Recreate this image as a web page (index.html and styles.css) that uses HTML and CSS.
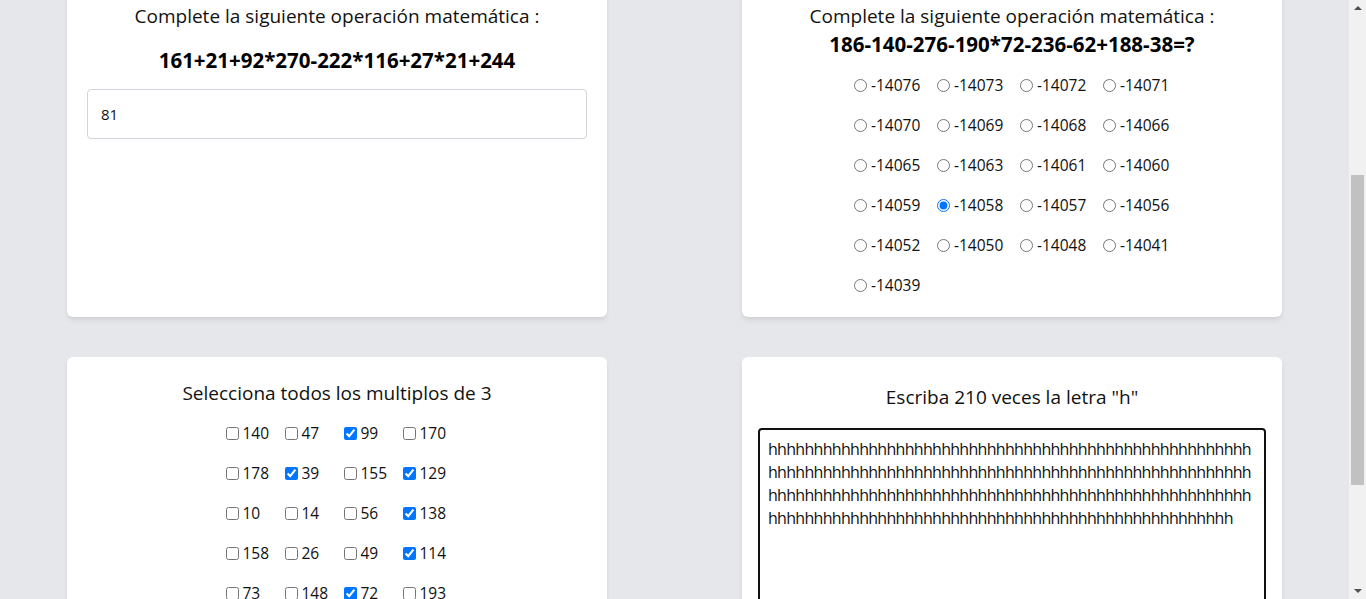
FILE: index.html
```html
<!DOCTYPE html>
<html lang="es">
<head>
<meta charset="utf-8">
<title>Ejercicios</title>
<link rel="stylesheet" href="styles.css">
</head>
<body>
<main class="page">
  <div class="grid">
    <section class="card card-a">
      <p class="title">Complete la siguiente operación matemática :</p>
      <p class="expr expr-a">161+21+92*270-222*116+27*21+244</p>
      <input class="answer" type="text" value="81">
    </section>

    <section class="card card-b">
      <p class="title">Complete la siguiente operación matemática :</p>
      <p class="expr">186-140-276-190*72-236-62+188-38=?</p>
      <div class="options radios">
        <label class="opt"><input type="radio" name="r"> -14076</label>
        <label class="opt"><input type="radio" name="r"> -14073</label>
        <label class="opt"><input type="radio" name="r"> -14072</label>
        <label class="opt"><input type="radio" name="r"> -14071</label>
        <label class="opt"><input type="radio" name="r"> -14070</label>
        <label class="opt"><input type="radio" name="r"> -14069</label>
        <label class="opt"><input type="radio" name="r"> -14068</label>
        <label class="opt"><input type="radio" name="r"> -14066</label>
        <label class="opt"><input type="radio" name="r"> -14065</label>
        <label class="opt"><input type="radio" name="r"> -14063</label>
        <label class="opt"><input type="radio" name="r"> -14061</label>
        <label class="opt"><input type="radio" name="r"> -14060</label>
        <label class="opt"><input type="radio" name="r"> -14059</label>
        <label class="opt"><input type="radio" name="r" checked> -14058</label>
        <label class="opt"><input type="radio" name="r"> -14057</label>
        <label class="opt"><input type="radio" name="r"> -14056</label>
        <label class="opt"><input type="radio" name="r"> -14052</label>
        <label class="opt"><input type="radio" name="r"> -14050</label>
        <label class="opt"><input type="radio" name="r"> -14048</label>
        <label class="opt"><input type="radio" name="r"> -14041</label>
        <label class="opt"><input type="radio" name="r"> -14039</label>
      </div>
    </section>

    <section class="card card-c">
      <p class="title">Selecciona todos los multiplos de 3</p>
      <div class="options checks">
        <label class="opt"><input type="checkbox"> 140</label>
        <label class="opt"><input type="checkbox"> 47</label>
        <label class="opt"><input type="checkbox" checked> 99</label>
        <label class="opt"><input type="checkbox"> 170</label>
        <label class="opt"><input type="checkbox"> 178</label>
        <label class="opt"><input type="checkbox" checked> 39</label>
        <label class="opt"><input type="checkbox"> 155</label>
        <label class="opt"><input type="checkbox" checked> 129</label>
        <label class="opt"><input type="checkbox"> 10</label>
        <label class="opt"><input type="checkbox"> 14</label>
        <label class="opt"><input type="checkbox"> 56</label>
        <label class="opt"><input type="checkbox" checked> 138</label>
        <label class="opt"><input type="checkbox"> 158</label>
        <label class="opt"><input type="checkbox"> 26</label>
        <label class="opt"><input type="checkbox"> 49</label>
        <label class="opt"><input type="checkbox" checked> 114</label>
        <label class="opt"><input type="checkbox"> 73</label>
        <label class="opt"><input type="checkbox"> 148</label>
        <label class="opt"><input type="checkbox" checked> 72</label>
        <label class="opt"><input type="checkbox"> 193</label>
      </div>
    </section>

    <section class="card card-d">
      <p class="title">Escriba 210 veces la letra "h"</p>
      <textarea class="typing" data-letter="h" data-count="210"></textarea>
    </section>
  </div>
</main>
<div class="scrollbar" aria-hidden="true">
  <span class="arrow arrow-up"></span>
  <div class="track"><span class="thumb"></span></div>
  <span class="arrow arrow-down"></span>
</div>
<script src="script.js"></script>
</body>
</html>
```

FILE: styles.css
```css
* { box-sizing: border-box; }

html, body {
  margin: 0;
  height: 599px;
  overflow: hidden;
}

body {
  display: flex;
  font-family: "Open Sans", "Noto Sans", sans-serif;
  color: #111;
  background: #e5e7eb;
}

.page {
  flex: 1;
  min-width: 0;
  overflow: hidden;
}

.grid {
  display: grid;
  grid-template-columns: 540px 540px;
  column-gap: 135px;
  row-gap: 40px;
  padding: 0 67px;
  margin-top: -16px;
}

.card {
  background: #fff;
  border-radius: 6px;
  box-shadow: 0 4px 6px -1px rgba(0,0,0,.08), 0 2px 4px -2px rgba(0,0,0,.08);
  padding: 20px 20px;
  display: flex;
  flex-direction: column;
  align-items: center;
}

.title {
  margin: 0;
  font-size: 19px;
  line-height: 24px;
  text-align: center;
  color: #111;
}

.expr {
  margin: 2px 0 0;
  font-size: 20.5px;
  line-height: 28px;
  font-weight: 700;
  color: #000;
  text-align: center;
}

.expr-a { margin-top: 18px; }

.answer {
  align-self: stretch;
  margin-top: 15px;
  height: 50px;
  border: 1px solid #d1d5db;
  border-radius: 4px;
  padding: 0 13px;
  font: inherit;
  font-size: 15px;
  color: #111;
  outline: none;
}

.options {
  display: grid;
  row-gap: 16px;
  margin-top: 15px;
  font-size: 15.5px;
}

.radios { grid-template-columns: repeat(4, 67px); column-gap: 16px; }
.checks { grid-template-columns: repeat(4, 46px); column-gap: 13px; }

.opt {
  display: flex;
  align-items: center;
  gap: 4px;
  height: 24px;
  white-space: nowrap;
  color: #111;
}

.opt input {
  margin: 0;
  width: 13px;
  height: 13px;
  flex: none;
}

.card-c { padding-top: 24px; }
.card-c .options { margin-top: 16px; }

.card-d { padding: 28px 16px 20px; }

.typing {
  align-self: stretch;
  margin-top: 19px;
  height: 240px;
  border: 2px solid #111;
  border-radius: 4px;
  padding: 8px;
  font-family: "Open Sans", "Noto Sans", sans-serif;
  font-size: 16px;
  letter-spacing: -0.7px;
  line-height: 23px;
  color: #111;
  caret-color: #000;
  resize: none;
  outline: none;
  overflow: hidden;
}

/* fake browser scrollbar */
.scrollbar {
  flex: none;
  width: 17px;
  background: #f1f1f1;
  display: flex;
  flex-direction: column;
  align-items: center;
}

.arrow {
  width: 0;
  height: 0;
  border-left: 4px solid transparent;
  border-right: 4px solid transparent;
  margin: 6px 0;
}
.arrow-up { border-bottom: 4px solid #505050; }
.arrow-down { border-top: 4px solid #505050; }

.track {
  flex: 1;
  align-self: stretch;
  display: flex;
  flex-direction: column;
  padding: 0 2px;
}

.thumb {
  margin-top: 159px;
  height: 310px;
  background: #c1c1c1;
}
```

FILE: script.js
```js
var ta = document.querySelector('.typing');
if (ta) {
  var n = parseInt(ta.getAttribute('data-count'), 10) || 0;
  ta.value = new Array(n + 1).join(ta.getAttribute('data-letter') || 'h');
  try {
    ta.focus({ preventScroll: true });
    ta.setSelectionRange(ta.value.length, ta.value.length);
  } catch (e) {}
}
```
